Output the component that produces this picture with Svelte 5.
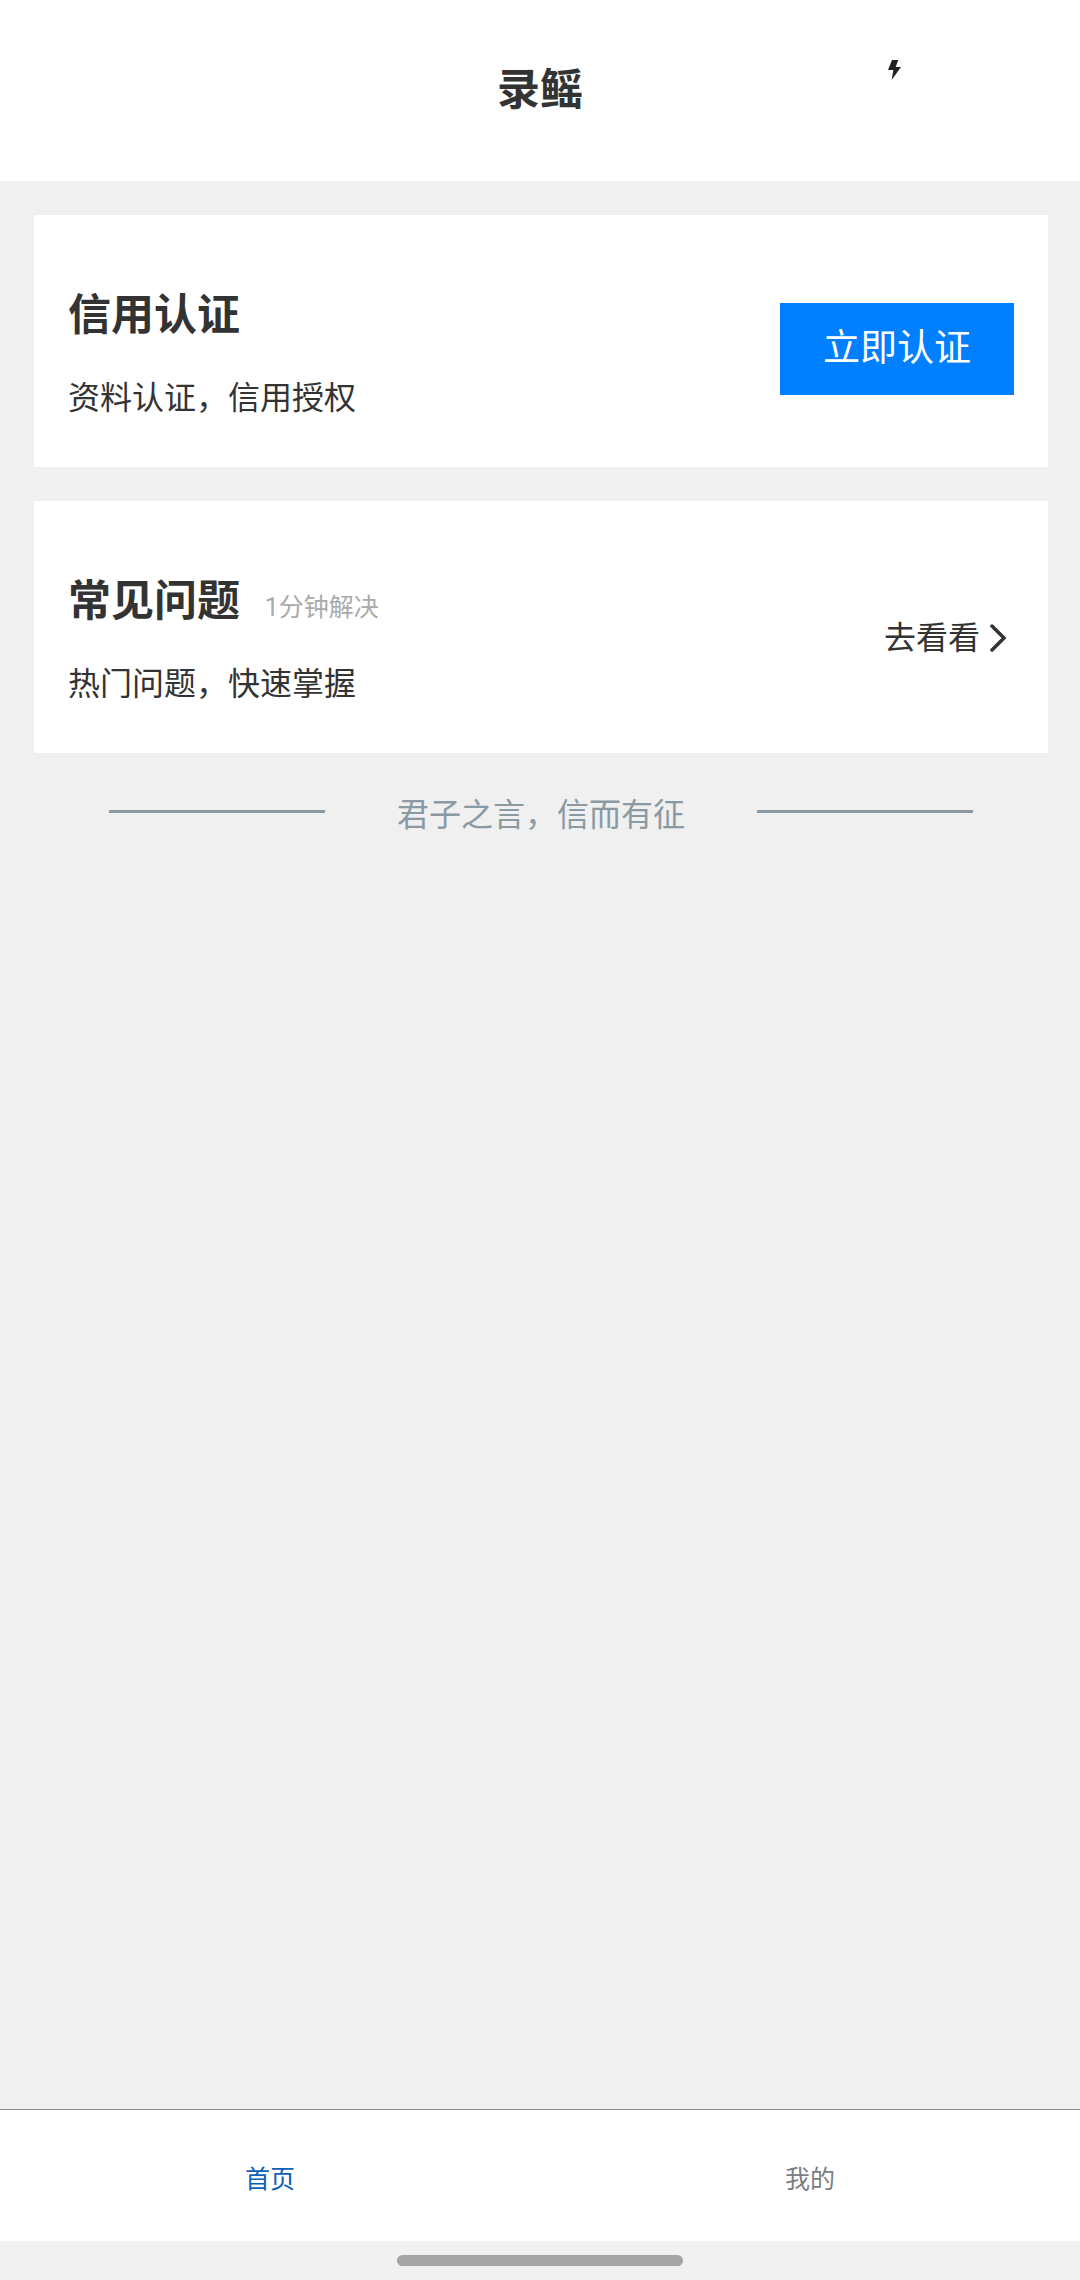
<script>
  const tabs = [
    { id: 'home', label: '首页' },
    { id: 'mine', label: '我的' }
  ];

  let active = $state('home');
</script>

<div class="page">
  <header>
    <h1>录鳐</h1>
    <svg class="bolt" viewBox="0 0 39 60" aria-hidden="true">
      <path d="M12 0h19l-8 21h16L11 60l5-30H0z" fill="#222" />
    </svg>
  </header>

  <main>
    <section class="card">
      <div class="info">
        <h2>信用认证</h2>
        <p>资料认证，信用授权</p>
      </div>
      <button class="verify" type="button">立即认证</button>
    </section>

    <section class="card">
      <div class="info">
        <h2>常见问题 <small>1分钟解决</small></h2>
        <p>热门问题，快速掌握</p>
      </div>
      <a class="more" href="#faq">
        去看看
        <svg viewBox="0 0 16 28" aria-hidden="true">
          <path d="M2 2l12 12L2 26" fill="none" stroke="#333" stroke-width="3.5" stroke-linecap="round" />
        </svg>
      </a>
    </section>

    <div class="motto">
      <span class="line"></span>
      <span>君子之言，信而有征</span>
      <span class="line"></span>
    </div>
  </main>

  <nav>
    {#each tabs as tab}
      <button type="button" class:active={active === tab.id} onclick={() => (active = tab.id)}>
        {tab.label}
      </button>
    {/each}
  </nav>

  <div class="gesture"><span></span></div>
</div>

<style>
  :global(body) {
    background: #f0f0f0;
  }

  .page {
    display: flex;
    flex-direction: column;
    min-height: 100vh;
    color: #333;
    font-family: Roboto, 'Noto Sans CJK SC', sans-serif;
    font-size: 32px;
    line-height: 48px;
  }

  h1,
  h2,
  p {
    margin: 0;
  }

  button {
    border: 0;
    padding: 0;
    font-family: inherit;
    cursor: pointer;
  }

  header {
    display: grid;
    grid-template-columns: 1fr auto 1fr;
    padding: 60px 0 61px;
    background: #fff;
  }

  h1,
  h2 {
    font-size: 43px;
    line-height: 60px;
    font-weight: 700;
  }

  h1 {
    grid-column: 2;
  }

  .bolt {
    width: 13px;
    height: 20px;
    justify-self: end;
    margin-right: 179px;
  }

  main {
    flex: 1;
    display: flex;
    flex-direction: column;
    gap: 34px;
    padding: 34px 32px 34px 34px;
  }

  .card {
    display: flex;
    align-items: center;
    justify-content: space-between;
    padding: 70px 34px 45px;
    background: #fff;
  }

  .info {
    display: flex;
    flex-direction: column;
    gap: 29px;
  }

  small {
    margin-left: 14px;
    color: #aaa;
    font-size: 25px;
    line-height: 1;
    font-weight: 400;
  }

  .verify {
    margin-bottom: 10px;
    padding: 0 43px;
    background: #0080ff;
    color: #fff;
    font-size: 37px;
    line-height: 92px;
  }

  .more {
    display: flex;
    align-items: center;
    gap: 10px;
    margin-bottom: 4px;
    padding-right: 8px;
    color: inherit;
    text-decoration: none;
  }

  .more svg {
    width: 16px;
    height: 28px;
  }

  .motto {
    display: flex;
    align-items: center;
    justify-content: center;
    gap: 72px;
    padding-top: 4px;
    color: #8a9aa3;
  }

  .line {
    width: 20vw;
    height: 3px;
    margin-bottom: 8px;
    background: #8a9aa3;
  }

  nav {
    display: flex;
    border-top: 1px solid #8c8c8c;
    background: #fff;
  }

  nav button {
    flex: 1;
    padding: 46px 0 37px;
    background: none;
    color: #7a7e83;
    font-size: 25px;
    line-height: 48px;
  }

  nav button.active {
    color: #0d60b8;
  }

  .gesture {
    display: flex;
    justify-content: center;
    padding: 14px 0;
    background: #f1f1f1;
  }

  .gesture span {
    width: 286px;
    height: 11px;
    border-radius: 6px;
    background: #a5a5a5;
  }
</style>
